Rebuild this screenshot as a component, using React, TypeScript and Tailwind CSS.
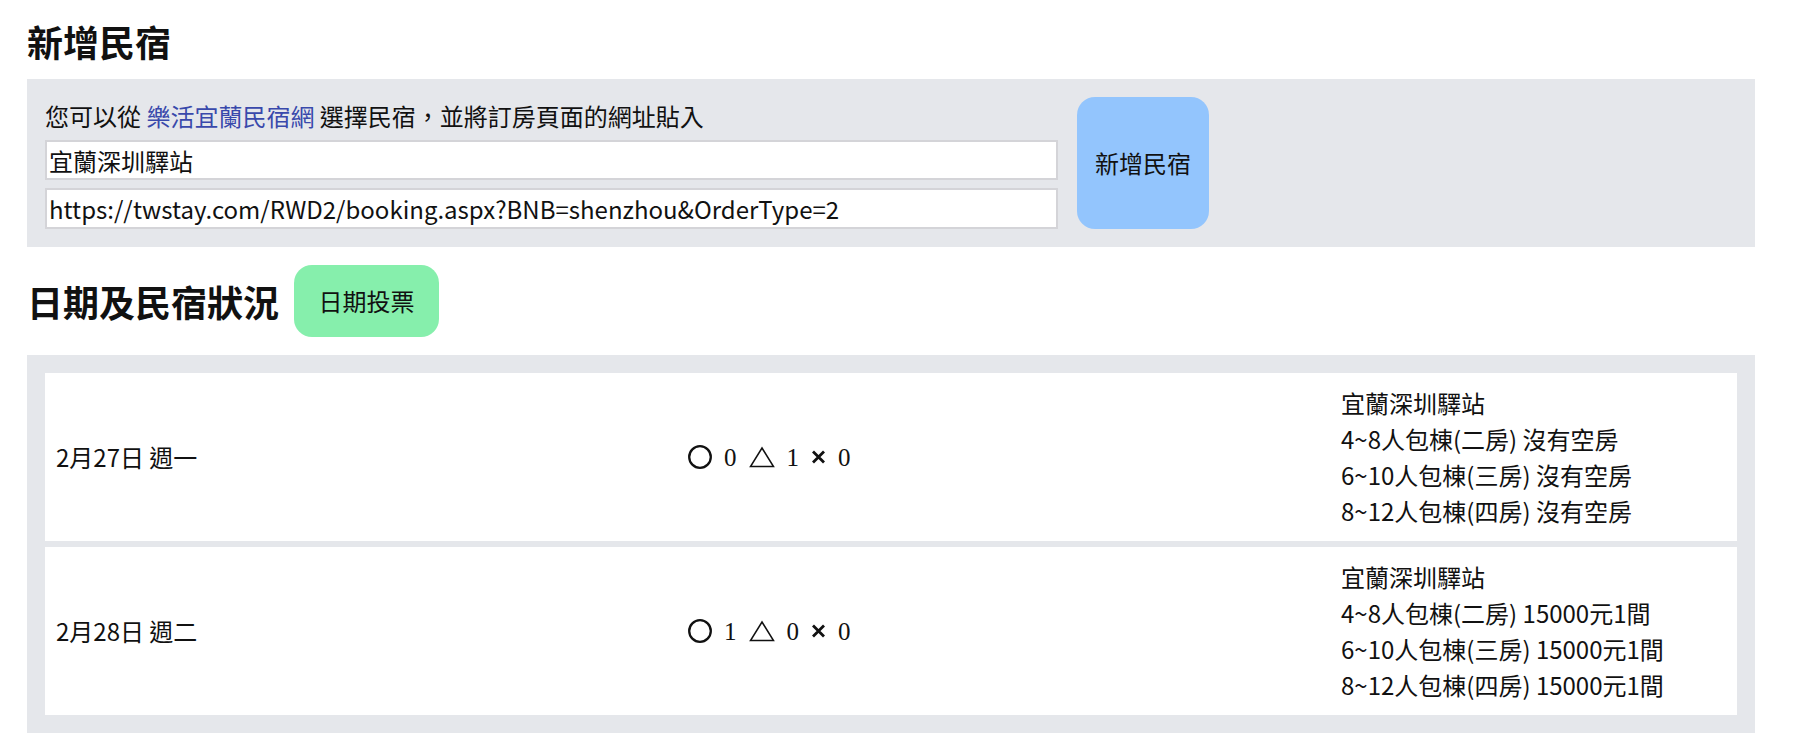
import React from "react";

const rows = [
  {
    date: "2月27日 週一",
    votes: { o: 0, t: 1, x: 0 },
    name: "宜蘭深圳驛站",
    rooms: [
      "4~8人包棟(二房) 沒有空房",
      "6~10人包棟(三房) 沒有空房",
      "8~12人包棟(四房) 沒有空房",
    ],
  },
  {
    date: "2月28日 週二",
    votes: { o: 1, t: 0, x: 0 },
    name: "宜蘭深圳驛站",
    rooms: [
      "4~8人包棟(二房) 15000元1間",
      "6~10人包棟(三房) 15000元1間",
      "8~12人包棟(四房) 15000元1間",
    ],
  },
];

const serif = { fontFamily: '"Liberation Serif", serif' };

function Votes({ o, t, x }: { o: number; t: number; x: number }) {
  return (
    <div className="flex items-center gap-[12px] text-[25px] leading-none" style={serif}>
      <svg width="24" height="24" viewBox="0 0 24 24" aria-label="○">
        <circle cx="12" cy="12" r="10.8" fill="none" stroke="#111" strokeWidth="2.3" />
      </svg>
      <span>{o}</span>
      <svg width="26" height="22" viewBox="0 0 26 22" aria-label="△">
        <path d="M13 2 L24.5 20.5 L1.5 20.5 Z" fill="none" stroke="#111" strokeWidth="1.5" />
      </svg>
      <span>{t}</span>
      <svg width="15" height="14" viewBox="0 0 15 14" aria-label="✕">
        <path d="M2 1.5 L13 12.5 M13 1.5 L2 12.5" stroke="#111" strokeWidth="2.8" />
      </svg>
      <span>{x}</span>
    </div>
  );
}

export default function App() {
  return (
    <div
      className="min-h-screen bg-white pl-[27px] pr-[46px] pt-[20px] text-[24px] text-[#111]"
      style={{ fontFamily: '"Noto Sans CJK TC", "Noto Sans", sans-serif' }}
    >
      <h1 className="text-[36px] font-bold leading-[42px]">新增民宿</h1>

      <div className="mt-[17px] flex items-stretch bg-[#e5e7eb] p-[18px]">
        <div className="flex w-[1013px] flex-col">
          <p className="mb-[5px] leading-[38px]">
            您可以從 <a className="text-[#3949ab]">樂活宜蘭民宿網</a> 選擇民宿，並將訂房頁面的網址貼入
          </p>
          <input
            className="h-[40px] border-2 border-[#d4d4d8] bg-white px-[2px] outline-none"
            defaultValue="宜蘭深圳驛站"
          />
          <input
            className="mt-[8px] h-[41px] border-2 border-[#d4d4d8] bg-white px-[2px] outline-none"
            defaultValue="https://twstay.com/RWD2/booking.aspx?BNB=shenzhou&OrderType=2"
          />
        </div>
        <button className="ml-[19px] w-[132px] rounded-[18px] bg-[#93c5fd]">
          新增民宿
        </button>
      </div>

      <div className="mt-[18px] flex items-center gap-[15px]">
        <h2 className="text-[36px] font-bold leading-[42px]">日期及民宿狀況</h2>
        <button className="h-[72px] w-[145px] rounded-[18px] bg-[#86efac]">
          日期投票
        </button>
      </div>

      <div className="mt-[18px] flex flex-col gap-[6px] bg-[#e5e7eb] p-[18px]">
        {rows.map((r) => (
          <div
            key={r.date}
            className="grid h-[168px] grid-cols-[632px_653px_1fr] items-center bg-white pl-[11px]"
          >
            <div>{r.date}</div>
            <Votes {...r.votes} />
            <div className="leading-[36px]">
              <div>{r.name}</div>
              {r.rooms.map((room) => (
                <div key={room}>{room}</div>
              ))}
            </div>
          </div>
        ))}
      </div>
    </div>
  );
}
